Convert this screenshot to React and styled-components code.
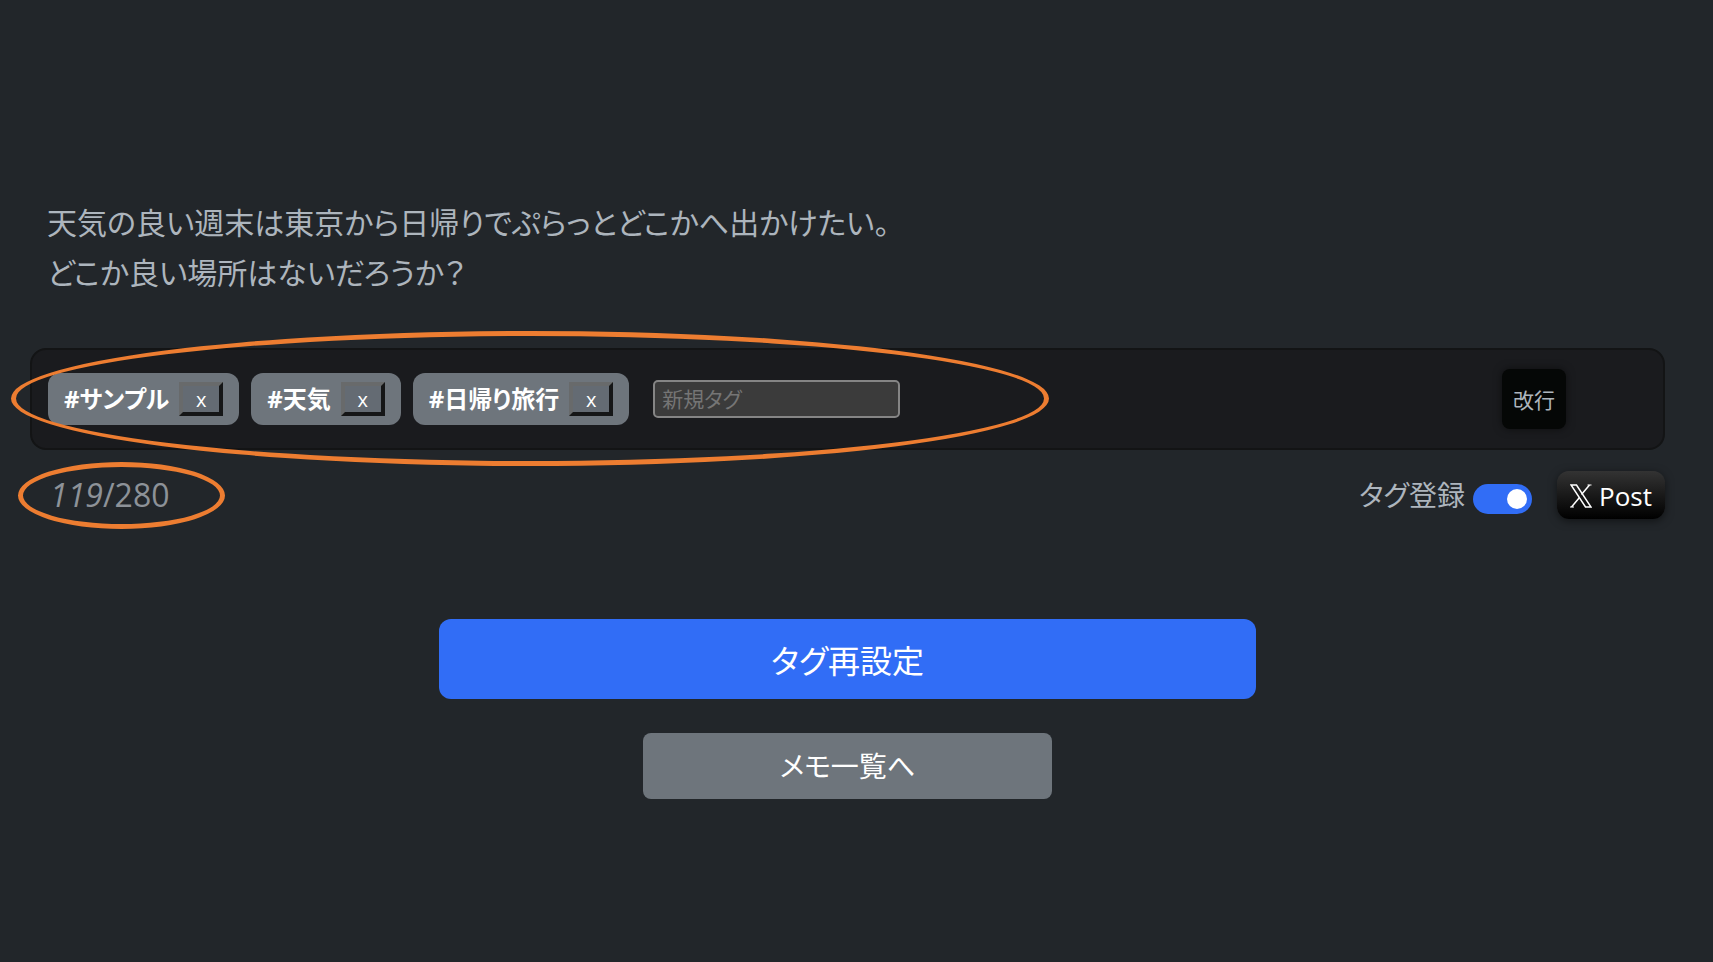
import { useState } from "react";
import styled, { createGlobalStyle } from "styled-components";

const GlobalStyle = createGlobalStyle`
  *, *::before, *::after {
    box-sizing: border-box;
  }

  body {
    margin: 0;
    min-height: 100vh;
    background: #22262a;
    color: #adb5bd;
    font-family: "Open Sans", "Noto Sans CJK JP", sans-serif;
    font-feature-settings: "palt";
  }

  button, input {
    font-family: inherit;
    font-feature-settings: inherit;
  }
`;

const Page = styled.main`
  display: flex;
  flex-direction: column;
  padding: 198px 48px 48px 30px;
`;

const Memo = styled.p`
  margin: 0 0 50px;
  padding: 0 17px;
  font-size: 30px;
  line-height: 50px;
`;

const TagPanel = styled.section`
  position: relative;
  display: flex;
  align-items: center;
  justify-content: space-between;
  min-height: 102px;
  padding: 16px 97px 16px 16px;
  background: #1a1b1e;
  border: 2px solid #131415;
  border-radius: 16px;
`;

const TagList = styled.div`
  display: flex;
  flex-wrap: wrap;
  align-items: center;
  gap: 12px;
`;

const Tag = styled.span`
  display: flex;
  align-items: center;
  gap: 10px;
  height: 52px;
  padding: 0 16px;
  background: #6e757c;
  border-radius: 12px;
  color: #fff;
  font-size: 24px;
  font-weight: 700;
  line-height: 32px;
`;

const RemoveButton = styled.button`
  width: 44px;
  height: 34px;
  padding: 2px 0 0;
  background: #646b73;
  border: 4px solid;
  border-color: #686a6b #151617 #151617 #686a6b;
  color: #fff;
  font-size: 20px;
  line-height: 24px;
`;

const TagInput = styled.input`
  width: 247px;
  height: 38px;
  margin-left: 12px;
  padding: 0 7px;
  background: #3b3b3b;
  border: 2px solid #858585;
  border-radius: 5px;
  color: #fff;
  font-size: 21px;

  &::placeholder {
    color: #757575;
    opacity: 1;
  }
`;

const BreakButton = styled.button`
  width: 64px;
  height: 60px;
  padding: 0;
  background: #050706;
  border: 0;
  border-radius: 8px;
  box-shadow: 0 0 8px rgba(0, 0, 0, 0.5);
  color: #adb5bd;
  font-size: 21px;
`;

const StatusBar = styled.div`
  position: relative;
  display: flex;
  align-items: center;
  justify-content: space-between;
  margin: 21px 0 100px;
`;

const Counter = styled.span`
  padding-left: 20px;
  color: #8d9298;
  font-size: 32px;
  line-height: 48px;
`;

const Actions = styled.div`
  display: flex;
  align-items: center;
  gap: 25px;
`;

const SwitchLabel = styled.label`
  display: flex;
  align-items: center;
  gap: 8px;
  font-size: 28px;
  line-height: 48px;
`;

const Switch = styled.input`
  appearance: none;
  display: flex;
  align-items: center;
  width: 59px;
  height: 30px;
  margin: 8px 0 0;
  padding: 0 5px;
  background: #6e757c;
  border-radius: 15px;

  &::before {
    content: "";
    width: 20px;
    height: 20px;
    background: #fff;
    border-radius: 50%;
  }

  &:checked {
    justify-content: flex-end;
    background: #316df6;
  }
`;

const PostButton = styled.button`
  display: flex;
  align-items: center;
  justify-content: center;
  gap: 7px;
  width: 108px;
  height: 48px;
  padding: 2px 0 0;
  background: linear-gradient(#333, #000);
  border: 0;
  border-radius: 12px;
  box-shadow: 0 2px 8px rgba(0, 0, 0, 0.5);
  color: #fff;
  font-size: 26px;
`;

const Navigation = styled.nav`
  display: flex;
  flex-direction: column;
  align-items: center;
  gap: 34px;
`;

const ResetButton = styled.button`
  width: 50%;
  height: 80px;
  background: #316df6;
  border: 0;
  border-radius: 12px;
  color: #fff;
  font-size: 32px;
`;

const ListLink = styled.a`
  width: 25%;
  background: #6e757c;
  border-radius: 8px;
  color: #fff;
  font-size: 28px;
  line-height: 66px;
  text-align: center;
  text-decoration: none;
`;

// Orange marker laid over the part being explained
const Highlight = styled.div`
  position: absolute;
  top: ${(props) => props.$top}px;
  left: ${(props) => props.$left}px;
  width: ${(props) => props.$width}px;
  height: ${(props) => props.$height}px;
  border: 5px solid #ed7d31;
  border-radius: 50%;
  pointer-events: none;
`;

const XLogo = () => (
  <svg width="22" height="24" viewBox="0 0 22 24" fill="none" stroke="#fff" aria-hidden="true">
    <path d="M1 1h5.500l14.500 22h-5.500z" strokeWidth="1.500" />
    <path d="M19.500 1l-8 9.500M9.500 13.500L1.500 23" strokeWidth="1.500" />
    <path d="M17.500 1h4M0 23h4" strokeWidth="1.200" />
  </svg>
);

const App = () => {
  const [tags, setTags] = useState(["サンプル", "天気", "日帰り旅行"]);
  const [register, setRegister] = useState(true);

  const removeTag = (name) => setTags(tags.filter((tag) => tag !== name));

  return (
    <>
      <GlobalStyle />
      <Page>
        <Memo>
          天気の良い週末は東京から日帰りでぷらっとどこかへ出かけたい。
          <br />
          どこか良い場所はないだろうか？
        </Memo>

        <TagPanel>
          <TagList>
            {tags.map((tag) => (
              <Tag key={tag}>
                #{tag}
                <RemoveButton type="button" onClick={() => removeTag(tag)}>
                  x
                </RemoveButton>
              </Tag>
            ))}
            <TagInput type="text" placeholder="新規タグ" aria-label="新規タグ" />
          </TagList>
          <BreakButton type="button">改行</BreakButton>
          <Highlight $top={-19} $left={-21} $width={1038} $height={135} />
        </TagPanel>

        <StatusBar>
          <Counter>
            <em>119</em>/280
          </Counter>
          <Actions>
            <SwitchLabel>
              タグ登録
              <Switch
                type="checkbox"
                role="switch"
                checked={register}
                onChange={(e) => setRegister(e.target.checked)}
              />
            </SwitchLabel>
            <PostButton type="button">
              <XLogo />
              Post
            </PostButton>
          </Actions>
          <Highlight $top={-9} $left={-12} $width={207} $height={67} />
        </StatusBar>

        <Navigation>
          <ResetButton type="button">タグ再設定</ResetButton>
          <ListLink href="#memos">メモ一覧へ</ListLink>
        </Navigation>
      </Page>
    </>
  );
};

export default App;
